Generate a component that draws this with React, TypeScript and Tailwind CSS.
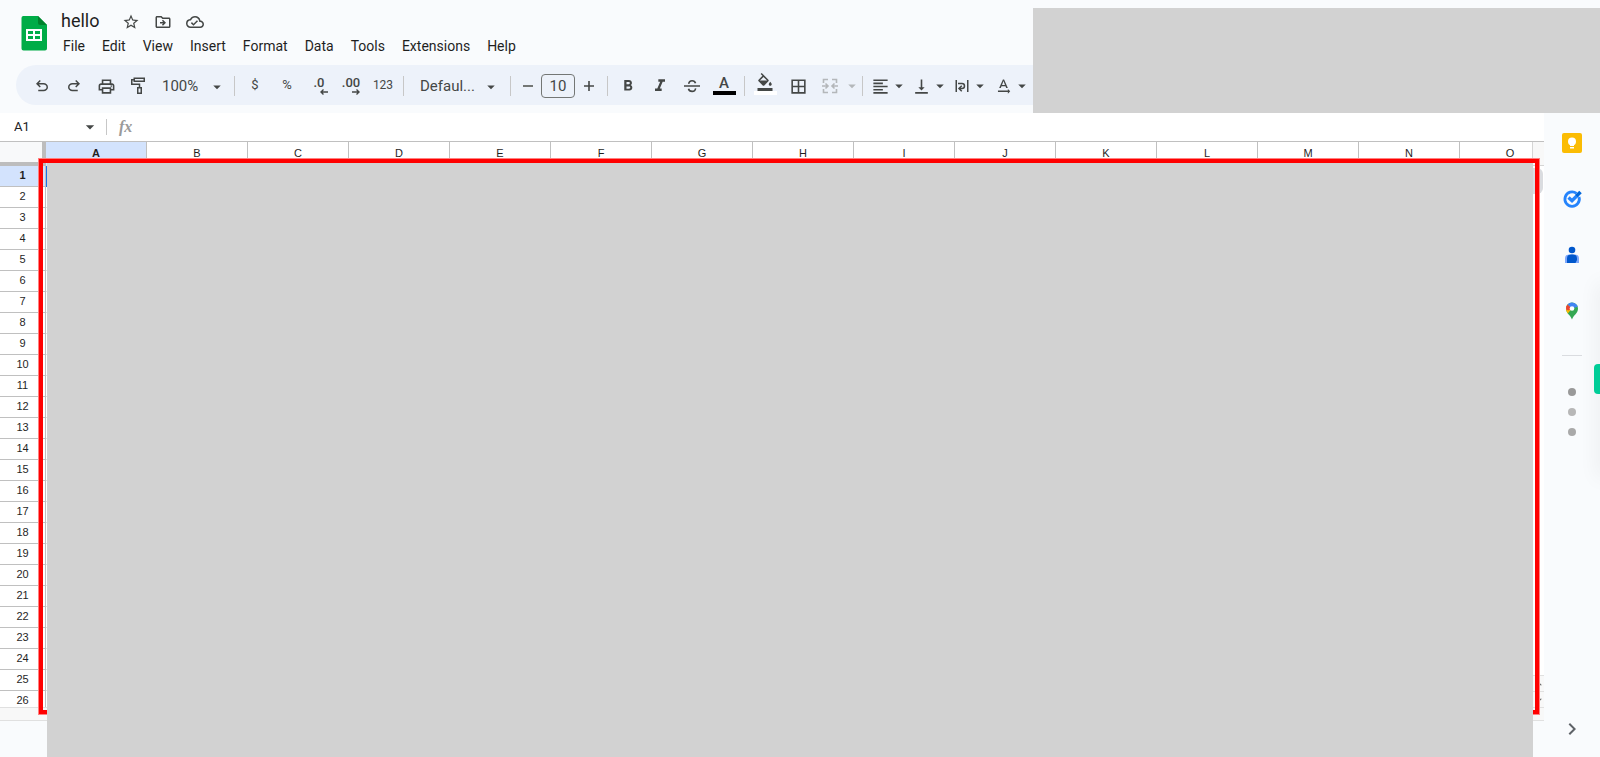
import type { ReactNode } from 'react';
import {
  MdArrowDropDown,
  MdArrowDropUp,
  MdBorderAll,
  MdChevronRight,
  MdFormatAlignLeft,
  MdFormatBold,
  MdFormatColorFill,
  MdFormatItalic,
  MdOutlineCloudDone,
  MdOutlineDriveFileMove,
  MdOutlinePrint,
  MdStarBorder,
  MdTextRotationNone,
  MdVerticalAlignBottom,
} from 'react-icons/md';

const menus = ['File', 'Edit', 'View', 'Insert', 'Format', 'Data', 'Tools', 'Extensions', 'Help'];
const columns = 'ABCDEFGHIJKLMNO'.split('');
const rows = Array.from({ length: 26 }, (_, i) => i + 1);

const SheetsLogo = () => (
  <svg viewBox="0 0 26 35" className="h-[35px] w-[26px]">
    <path d="M2 0H17l9 9v23.500a2 2 0 0 1-2 2H2.500a2 2 0 0 1-2-2V2a2 2 0 0 1 1.500-2z" fill="#00ac47" />
    <path d="M17 0l9 9h-7a2 2 0 0 1-2-2z" fill="#00832d" />
    <path
      d="M5 13h16v12H5zM7 15v3h5v-3zM14 15v3h5v-3zM7 20v3h5v-3zM14 20v3h5v-3z"
      fill="#fff"
      fillRule="evenodd"
    />
  </svg>
);

const UndoIcon = () => (
  <svg viewBox="0 -960 960 960" className="size-[18px]" fill="currentColor">
    <path d="M280-200v-80h284q63 0 109.500-40T720-420q0-60-46.500-100T564-560H312l104 104-56 56-200-200 200-200 56 56-104 104h252q97 0 166.500 63T800-420q0 94-69.500 157T564-200H280Z" />
  </svg>
);

const RedoIcon = () => (
  <svg viewBox="0 -960 960 960" className="size-[18px]" fill="currentColor">
    <path d="M396-200q-97 0-166.500-63T160-420q0-94 69.500-157T396-640h252L544-744l56-56 200 200-200 200-56-56 104-104H396q-63 0-109.500 40T240-420q0 60 46.500 100T396-280h284v80H396Z" />
  </svg>
);

const PaintIcon = () => (
  <svg viewBox="0 0 18 18" className="size-[18px]" fill="none" stroke="currentColor" strokeWidth="1.5">
    <path d="M5.250 1.250h10v3h-10zM5 2.750H2.750v4.500H10.500v3M8.750 10.750h3.500v5.500h-3.500z" />
  </svg>
);

const DecimalIcon = ({ digits, right }: { digits: string; right?: boolean }) => (
  <span className="flex flex-col">
    <span className="h-3 text-[13px] leading-3 font-medium">{digits}</span>
    <svg viewBox="0 0 8 6" className={right ? 'h-1.5 w-2 self-end' : 'ml-2.5 h-1.5 w-2'} fill="none" stroke="currentColor" strokeWidth="1.4">
      <path d={right ? 'M0 3h7M4.500 .5 7 3 4.500 5.500' : 'M8 3H1M3.500 .5 1 3l2.500 2.500'} />
    </svg>
  </span>
);

const StrikeIcon = () => (
  <svg viewBox="0 0 18 18" className="size-[18px]" fill="none" stroke="currentColor" strokeWidth="1.6">
    <path d="M1 9h16M12.500 6.300C12.100 4.700 10.800 3.800 9.100 3.800 7.200 3.800 5.700 4.900 5.900 6.800M5.500 11.700c.4 1.700 1.700 2.700 3.600 2.700 2.100 0 3.500-1.200 3.400-3" />
  </svg>
);

const MergeIcon = () => (
  <svg viewBox="0 0 18 18" className="size-[18px] shrink-0" fill="none" stroke="currentColor" strokeWidth="1.6">
    <path d="M7 2.500H2.500V6M11 2.500h4.500V6M7 15.500H2.500V12M11 15.500h4.500V12M1 9h5.500M4.500 6.500 7 9l-2.500 2.500M17 9h-5.500M13.500 6.500 11 9l2.500 2.500" />
  </svg>
);

const WrapIcon = () => (
  <svg viewBox="0 0 18 18" className="size-[18px]" fill="none" stroke="currentColor" strokeWidth="1.5">
    <path d="M3.250 3v12M14.750 3v12M5 6.500h4a2.500 2.500 0 0 1 0 5H6.500M8.750 8.800 6 11.500l2.750 2.700" />
  </svg>
);

const KeepIcon = () => (
  <svg viewBox="0 0 20 20" className="size-5">
    <rect width="20" height="20" rx="2" fill="#fbbc04" />
    <circle cx="10" cy="8.500" r="4" fill="#fff" />
    <path d="M8 10h4v3H8zM8 14h4v1.500H8z" fill="#fff" />
  </svg>
);

const TasksIcon = () => (
  <svg viewBox="0 0 20 20" className="size-5" fill="none">
    <path d="M14.500 4.400A7.200 7.200 0 1 0 17 8" stroke="#2684fc" strokeWidth="2.800" />
    <path d="M6.500 8.500 10 11.700l5.500-5.400" stroke="#2684fc" strokeWidth="3.400" />
    <path d="m14.500 7 4-4" stroke="#0066da" strokeWidth="3.600" />
  </svg>
);

const ContactsIcon = () => (
  <svg viewBox="0 0 20 20" className="size-5">
    <path d="M3 18v-4.500a4 4 0 0 1 4-4h6a4 4 0 0 1 4 4V18z" fill="#7da7fb" />
    <path d="M5 18v-4.500a4 4 0 0 1 4-4h2a4 4 0 0 1 4 4V15l-1.500 3z" fill="#0057cc" />
    <circle cx="10" cy="5" r="3.300" fill="#0057cc" />
  </svg>
);

const MapsIcon = () => (
  <svg viewBox="0 0 20 20" className="size-5">
    <path d="M4 7.500a6 6 0 0 1 12 0c0 5-4.500 6.500-6 11-1.500-4.500-6-6-6-11z" fill="#34a853" />
    <path d="M4 7.500c0-1.500.6-2.900 1.500-4L10 7.500 5.700 12.500C4.500 10.500 4 9 4 7.500z" fill="#fbbc04" />
    <path d="M5.500 3.500 9.500 7l-3 2.500L4.100 8.500A6 6 0 0 1 5.500 3.500z" fill="#ea4335" />
    <path d="M5.500 3.500A6 6 0 0 1 15.700 5.800L10 7.500z" fill="#4285f4" />
    <circle cx="10" cy="7.500" r="2.300" fill="#fff" />
  </svg>
);

const Divider = () => <div className="mx-1 h-5 w-px shrink-0 bg-[#c7c7c7]" />;

const Tool = ({ label, children }: { label: string; children: ReactNode }) => (
  <button aria-label={label} className="flex h-8 w-8 shrink-0 items-center justify-center text-sm">
    {children}
  </button>
);

const DropTool = ({ label, children }: { label: string; children: ReactNode }) => (
  <button aria-label={label} className="flex h-8 w-[41px] shrink-0 items-center pl-1">
    {children}
    <MdArrowDropDown size={18} />
  </button>
);

const Toolbar = () => (
  <div className="ml-4 flex h-10 items-center rounded-l-full bg-[#edf2fa] pt-0.5 pl-2.5 text-[#444746]">
    <Tool label="Undo"><UndoIcon /></Tool>
    <Tool label="Redo"><RedoIcon /></Tool>
    <Tool label="Print"><MdOutlinePrint size={19} /></Tool>
    <Tool label="Paint format"><PaintIcon /></Tool>
    <div className="relative w-19 shrink-0">
      <select aria-label="Zoom" className="w-full appearance-none pl-2 text-[15px]">
        <option>100%</option>
      </select>
      <MdArrowDropDown size={18} className="pointer-events-none absolute top-1 right-1" />
    </div>
    <Divider />
    <Tool label="Format as currency"><span className="pb-0.5 text-[13px]">$</span></Tool>
    <Tool label="Format as percent"><span className="pb-0.5 text-[13px]">%</span></Tool>
    <Tool label="Decrease decimal places"><DecimalIcon digits=".0" /></Tool>
    <Tool label="Increase decimal places"><DecimalIcon digits=".00" right /></Tool>
    <Tool label="More formats"><span className="pb-0.5 text-xs">123</span></Tool>
    <Divider />
    <div className="relative w-[98px] shrink-0">
      <select aria-label="Font" className="w-full appearance-none pl-3 text-[15px]">
        <option>Defaul...</option>
      </select>
      <MdArrowDropDown size={18} className="pointer-events-none absolute top-1 right-1.5" />
    </div>
    <Divider />
    <button aria-label="Decrease font size" className="flex h-8 w-[26px] shrink-0 items-center justify-center">
      <span className="h-0.5 w-2.5 bg-[#747775]" />
    </button>
    <input
      aria-label="Font size"
      defaultValue="10"
      className="h-6 w-[34px] shrink-0 rounded-sm border border-[#747775] text-center text-[15px]"
    />
    <button aria-label="Increase font size" className="flex h-8 w-7 shrink-0 items-center justify-center">
      <svg viewBox="0 0 10 10" className="size-2.5" stroke="currentColor" strokeWidth="1.600">
        <path d="M5 0v10M0 5h10" />
      </svg>
    </button>
    <Divider />
    <Tool label="Bold"><MdFormatBold size={18} /></Tool>
    <Tool label="Italic"><MdFormatItalic size={20} /></Tool>
    <Tool label="Strikethrough"><StrikeIcon /></Tool>
    <button aria-label="Text color" className="flex h-8 w-8 shrink-0 items-start justify-center pt-[3px]">
      <span className="h-[22px] w-[23px] border-b-4 border-black text-center text-[15px] leading-5 font-medium">A</span>
    </button>
    <Divider />
    <button aria-label="Fill color" className="flex h-8 w-8 shrink-0 items-start justify-center pt-[3px]">
      <span className="flex h-[22px] w-[23px] justify-center border-b-4 border-white">
        <MdFormatColorFill size={18} />
      </span>
    </button>
    <button aria-label="Borders" className="flex h-8 w-[34px] shrink-0 items-center justify-center">
      <MdBorderAll size={19} />
    </button>
    <button aria-label="Merge cells" disabled className="flex h-8 w-[43px] shrink-0 items-center gap-1 pl-1.5 text-[#b4b7ba]">
      <MergeIcon />
      <MdArrowDropDown size={18} className="shrink-0" />
    </button>
    <Divider />
    <DropTool label="Horizontal align"><MdFormatAlignLeft size={19} /></DropTool>
    <DropTool label="Vertical align"><MdVerticalAlignBottom size={19} /></DropTool>
    <DropTool label="Text wrapping"><WrapIcon /></DropTool>
    <DropTool label="Text rotation"><MdTextRotationNone size={19} /></DropTool>
  </div>
);

const Header = () => (
  <header className="h-[113px] shrink-0">
    <div className="flex h-[65px] pt-2 pl-[21px]">
      <div className="pt-2">
        <SheetsLogo />
      </div>
      <div className="pl-1.5">
        <div className="flex h-7 items-center gap-3 pl-2 text-[#444746]">
          <h1 className="pr-[11px] pb-0.5 text-lg leading-6 text-[#1f1f1f]">hello</h1>
          <button aria-label="Star"><MdStarBorder size={18} /></button>
          <button aria-label="Move" className="px-0.5"><MdOutlineDriveFileMove size={18} /></button>
          <button aria-label="Document status"><MdOutlineCloudDone size={18} /></button>
        </div>
        <nav className="flex gap-px pl-0.5">
          {menus.map((menu) => (
            <button key={menu} className="px-2 text-sm leading-5 text-[#1f1f1f]">
              {menu}
            </button>
          ))}
        </nav>
      </div>
    </div>
    <Toolbar />
  </header>
);

const FormulaBar = () => (
  <div className="flex h-7 shrink-0 items-center bg-white">
    <input aria-label="Name box" defaultValue="A1" className="w-20 pl-3.5 text-[13px] text-[#202124]" />
    <MdArrowDropDown size={20} className="text-[#444746]" />
    <div className="ml-1.5 h-4 w-px bg-[#c7c7c7]" />
    <span className="pl-3 font-['Liberation_Serif',serif] text-base leading-5 font-bold text-[#9a9a9a] italic">fx</span>
  </div>
);

const Sheet = () => (
  <div className="flex min-h-0 flex-1 border-t border-[#c0c0c0] bg-white">
    <div className="min-w-0 flex-1 overflow-hidden">
      <table className="w-[1561px] table-fixed border-separate border-spacing-0 font-['Liberation_Sans',sans-serif] text-[11px] text-[#1f1f1f]">
        <thead>
          <tr className="h-6">
            <th aria-label="Select all" className="w-[46px] border-r-4 border-b-4 border-[#bdbdbd] bg-[#f8f9fa] p-0" />
            {columns.map((column) => (
              <th
                key={column}
                className={
                  column === 'A'
                    ? 'border-r border-[#c0c0c0] bg-[#d3e3fd] p-0 pb-0.5 font-bold'
                    : 'border-r border-[#c0c0c0] p-0 pb-0.5 font-normal'
                }
              >
                {column}
              </th>
            ))}
          </tr>
        </thead>
        <tbody>
          {rows.map((row) => (
            <tr key={row} className="h-[21px]">
              <th
                className={
                  row === 1
                    ? 'border-r border-b border-[#c0c0c0] bg-[#d3e3fd] p-0 pb-0.5 font-bold'
                    : 'border-r border-b border-[#c0c0c0] p-0 pb-0.5 font-normal'
                }
              >
                {row}
              </th>
              {columns.map((column) => (
                <td
                  key={column}
                  className={
                    row === 1 && column === 'A'
                      ? 'border-2 border-[#1a73e8] p-0'
                      : 'border-r border-b border-[#e1e1e1] p-0'
                  }
                />
              ))}
            </tr>
          ))}
        </tbody>
      </table>
    </div>
    <div className="flex w-3 shrink-0 flex-col text-[#666]">
      <div className="h-6 border-b border-l border-[#d5d5d5] bg-[#f8f8f8]" />
      <div className="mt-0.5 mr-px h-[26px] rounded-r-md bg-[#dadce0]" />
      <button aria-label="Scroll up" className="mt-auto h-4 border-t border-[#e0e0e0] bg-[#f8f8f8]">
        <MdArrowDropUp size={14} />
      </button>
      <button aria-label="Scroll down" className="h-4 border-t border-[#e0e0e0] bg-[#f8f8f8]">
        <MdArrowDropDown size={14} />
      </button>
    </div>
  </div>
);

const SidePanel = () => (
  <aside className="relative flex w-14 shrink-0 flex-col items-center pt-5">
    <div className="flex flex-col gap-9">
      <button aria-label="Keep"><KeepIcon /></button>
      <button aria-label="Tasks"><TasksIcon /></button>
      <button aria-label="Contacts"><ContactsIcon /></button>
      <button aria-label="Maps"><MapsIcon /></button>
    </div>
    <div className="mt-[34px] h-px w-5 bg-[#dadce0]" />
    <div className="mt-8 flex flex-col gap-3">
      <span className="size-2 rounded-full bg-[#999]" />
      <span className="size-2 rounded-full bg-[#b7b7b7]" />
      <span className="size-2 rounded-full bg-[#a9a9a9]" />
    </div>
    <button aria-label="Hide side panel" className="mt-auto mb-4 text-[#5f6368]">
      <MdChevronRight size={24} />
    </button>
    <div className="absolute top-[170px] -right-2 h-[195px] w-2 shadow-[0_0_20px_rgba(0,0,0,0.1)]" />
    <button aria-label="Open extension" className="absolute top-[251px] right-0 h-[30px] w-1.5 rounded-l bg-[#00cd98]" />
  </aside>
);

export default function App() {
  return (
    <div className="relative flex h-screen flex-col overflow-hidden bg-[#f9fbfd] font-[Roboto,sans-serif]">
      <Header />
      <div className="flex min-h-0 flex-1">
        <main className="flex min-w-0 flex-1 flex-col">
          <FormulaBar />
          <Sheet />
          <div className="h-3.5 shrink-0 border-y border-[#e0e0e0] bg-[#f8f8f8]" />
          <footer className="h-9 shrink-0" />
        </main>
        <SidePanel />
      </div>

      {/* Highlight frame around the cells, with the blanked areas on top */}
      <div className="pointer-events-none absolute top-[158px] right-[60px] bottom-[42px] left-[38px] border border-[#ff8080]">
        <div className="h-full border-4 border-[#ff0000]" />
      </div>
      <div className="absolute top-[163px] right-[67px] bottom-0 left-[47px] bg-[#d2d2d2]" />
      <div className="absolute top-2 right-0 h-[105px] w-[567px] bg-[#d2d2d2]" />
    </div>
  );
}
